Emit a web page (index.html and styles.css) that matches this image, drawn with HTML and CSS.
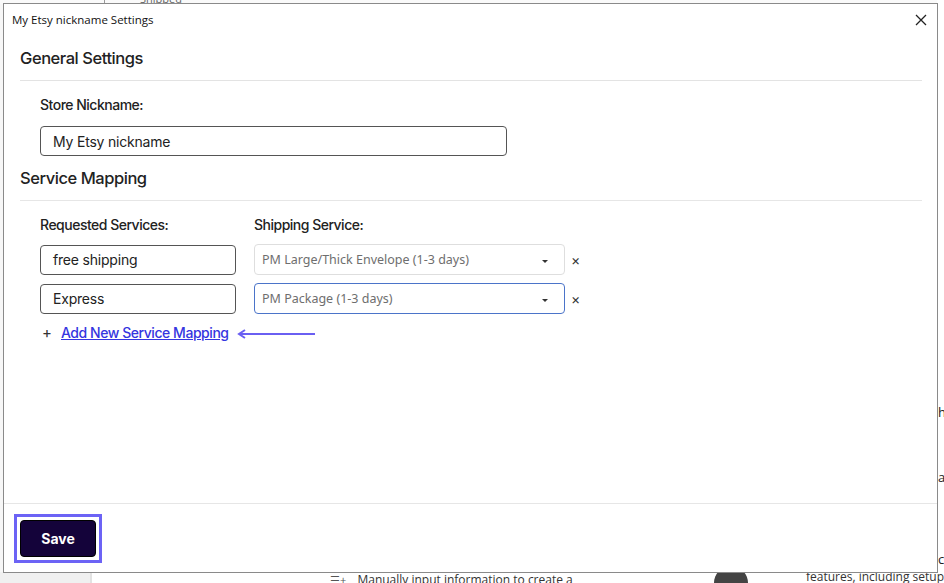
FILE: index.html
```html
<!DOCTYPE html>
<html>
<head>
<meta charset="utf-8">
<link rel="stylesheet" href="styles.css">
</head>
<body>
<div class="page">
  <div class="bg-top"><span class="bg-line"></span><span class="bg-shipped">Shipped</span></div>
  <div class="bg-right">
    <span class="bg-r1">h</span>
    <span class="bg-r2">a</span>
    <span class="bg-r3">c</span>
  </div>
  <div class="bg-bottom">
    <div class="bg-col"></div>
    <div class="bg-manual"><span class="bg-icon">☰+</span> Manually input information to create a</div>
    <div class="bg-play"></div>
    <div class="bg-feat">features, including setup and</div>
  </div>

  <div class="modal">
    <div class="modal-head">
      <span class="modal-title">My Etsy nickname Settings</span>
      <svg class="close" width="12" height="12" viewBox="0 0 12 12"><path d="M1 1L11 11M11 1L1 11" stroke="#222" stroke-width="1.3"/></svg>
    </div>
    <div class="modal-body">
      <h2 class="section">General Settings</h2>
      <div class="section-body">
        <div class="label">Store Nickname:</div>
        <div class="input wide">My Etsy nickname</div>
      </div>
      <h2 class="section section-2">Service Mapping</h2>
      <div class="section-body">
        <div class="map-grid">
          <div class="label">Requested Services:</div>
          <div class="label">Shipping Service:</div>
          <div></div>
          <div class="input">free shipping</div>
          <div class="select"><span>PM Large/Thick Envelope (1-3 days)</span><span class="caret"></span></div>
          <div class="remove">×</div>
          <div class="input">Express</div>
          <div class="select focused"><span>PM Package (1-3 days)</span><span class="caret"></span></div>
          <div class="remove">×</div>
        </div>
        <div class="add-row">
          <span class="plus">+</span>
          <a class="add-link">Add New Service Mapping</a>
          <svg class="arrow" width="80" height="10" viewBox="0 0 80 10"><path d="M2 5H78M8 1L2 5L8 9" stroke="#6a5ff2" stroke-width="2" fill="none"/></svg>
        </div>
      </div>
    </div>
    <div class="modal-foot">
      <div class="save-ring"><button class="save">Save</button></div>
    </div>
  </div>
</div>
</body>
</html>
```

FILE: styles.css
```css
* { box-sizing: border-box; }
html, body { margin: 0; padding: 0; }
body {
  width: 944px;
  height: 583px;
  overflow: hidden;
  background: #f7f7f7;
  font-family: Inter, "Noto Sans", sans-serif;
  color: #222;
}
.page { position: relative; width: 944px; height: 583px; }

/* background page fragments */
.bg-top { position: absolute; left: 0; top: 0; width: 944px; height: 4px; background: #fafafa; }
.bg-line { position: absolute; left: 104px; top: 0; width: 1px; height: 4px; background: #999; }
.bg-shipped { position: absolute; left: 140px; top: -9px; font: 11px "Open Sans", sans-serif; color: #666; }
.bg-right { position: absolute; left: 937px; top: 0; width: 7px; height: 583px; background: #fff; font: 13px "Open Sans", sans-serif; color: #222; }
.bg-right span { position: absolute; left: 1px; }
.bg-r1 { top: 403px; }
.bg-r2 { top: 468px; }
.bg-r3 { top: 550px; }
.bg-bottom { position: absolute; left: 0; top: 572px; width: 944px; height: 11px; background: #fff; overflow: hidden; }
.bg-col { position: absolute; left: 0; top: 0; width: 92px; height: 11px; background: #f0f0f0; border-right: 2px solid #e2e2e2; }
.bg-manual { position: absolute; left: 330px; top: -1px; font: 12px "Open Sans", sans-serif; color: #333; white-space: nowrap; }
.bg-icon { font-size: 11px; color: #555; margin-right: 8px; }
.bg-play { position: absolute; left: 714px; top: -6px; width: 34px; height: 34px; border-radius: 50%; background: #444; }
.bg-feat { position: absolute; left: 806px; top: -4px; font: 12px "Open Sans", sans-serif; color: #333; white-space: nowrap; }

/* modal */
.modal {
  position: absolute;
  left: 3px;
  top: 3px;
  width: 935px;
  height: 570px;
  background: #fff;
  border: 1px solid #8a8a8a;
  display: flex;
  flex-direction: column;
}
.modal-head {
  height: 31px;
  display: flex;
  align-items: center;
  justify-content: space-between;
  padding: 0 10px 0 8px;
}
.modal-title { font: 11.5px "Open Sans", sans-serif; color: #111; }
.close { margin-top: 1px; }
.modal-body { flex: 1; padding: 0 15px 0 16px; }
.section {
  margin: 0;
  font-size: 16.5px;
  letter-spacing: -0.45px;
  font-weight: 500;
  line-height: 22px;
  padding: 12px 0 11px;
  border-bottom: 1px solid #e3e3e3;
  color: #222;
}
.section-2 { padding-top: 0; border-bottom-color: #e6e6e6; }
.section-body { padding: 14px 0 0 20px; }
.label { font-size: 14px; letter-spacing: -0.5px; font-weight: 500; line-height: 20px; color: #222; }
.input {
  height: 30px;
  border: 1px solid #555;
  border-radius: 4px;
  padding: 0 12px;
  display: flex;
  align-items: center;
  font-size: 14px;
  letter-spacing: -0.2px;
  color: #222;
}
.input.wide { width: 467px; margin-top: 11px; margin-bottom: 11px; }
.map-grid {
  display: grid;
  grid-template-columns: 196px 311px 20px;
  column-gap: 18px;
  row-gap: 8px;
  align-items: center;
}
.map-grid > .label { margin-bottom: 1px; }
.select {
  height: 31px;
  border: 1px solid #dedede;
  border-radius: 4px;
  padding: 0 16px 0 7px;
  display: flex;
  align-items: center;
  justify-content: space-between;
  font-family: "Noto Sans", sans-serif;
  font-size: 12.5px;
  color: #6e6e6e;
}
.select.focused { border-color: #4b74c9; }
.caret {
  width: 0; height: 0;
  border-left: 3px solid transparent;
  border-right: 3px solid transparent;
  border-top: 3px solid #333;
  margin-top: 3px;
}
.remove { font-size: 14px; color: #333; margin-left: -12px; }
.add-row { display: flex; align-items: center; margin-top: 9px; }
.plus { font-size: 15px; color: #333; width: 21px; padding-left: 2px; }
.add-link {
  font-size: 14px;
  letter-spacing: -0.45px;
  font-weight: 500;
  color: #3535e0;
  text-decoration: underline;
}
.arrow { margin-left: 8px; margin-top: 3px; }
.modal-foot {
  height: 69px;
  border-top: 1px solid #e6e6e6;
  padding: 10px 0 0 10px;
}
.save-ring {
  display: inline-block;
  border: 3px solid #6c63f5;
  padding: 3px;
}
.save {
  display: block;
  width: 76px;
  height: 37px;
  border: 1px solid #000;
  border-radius: 4px;
  background: #14033a;
  color: #fff;
  font-family: Inter, sans-serif;
  font-size: 14px;
  font-weight: 700;
}
```
